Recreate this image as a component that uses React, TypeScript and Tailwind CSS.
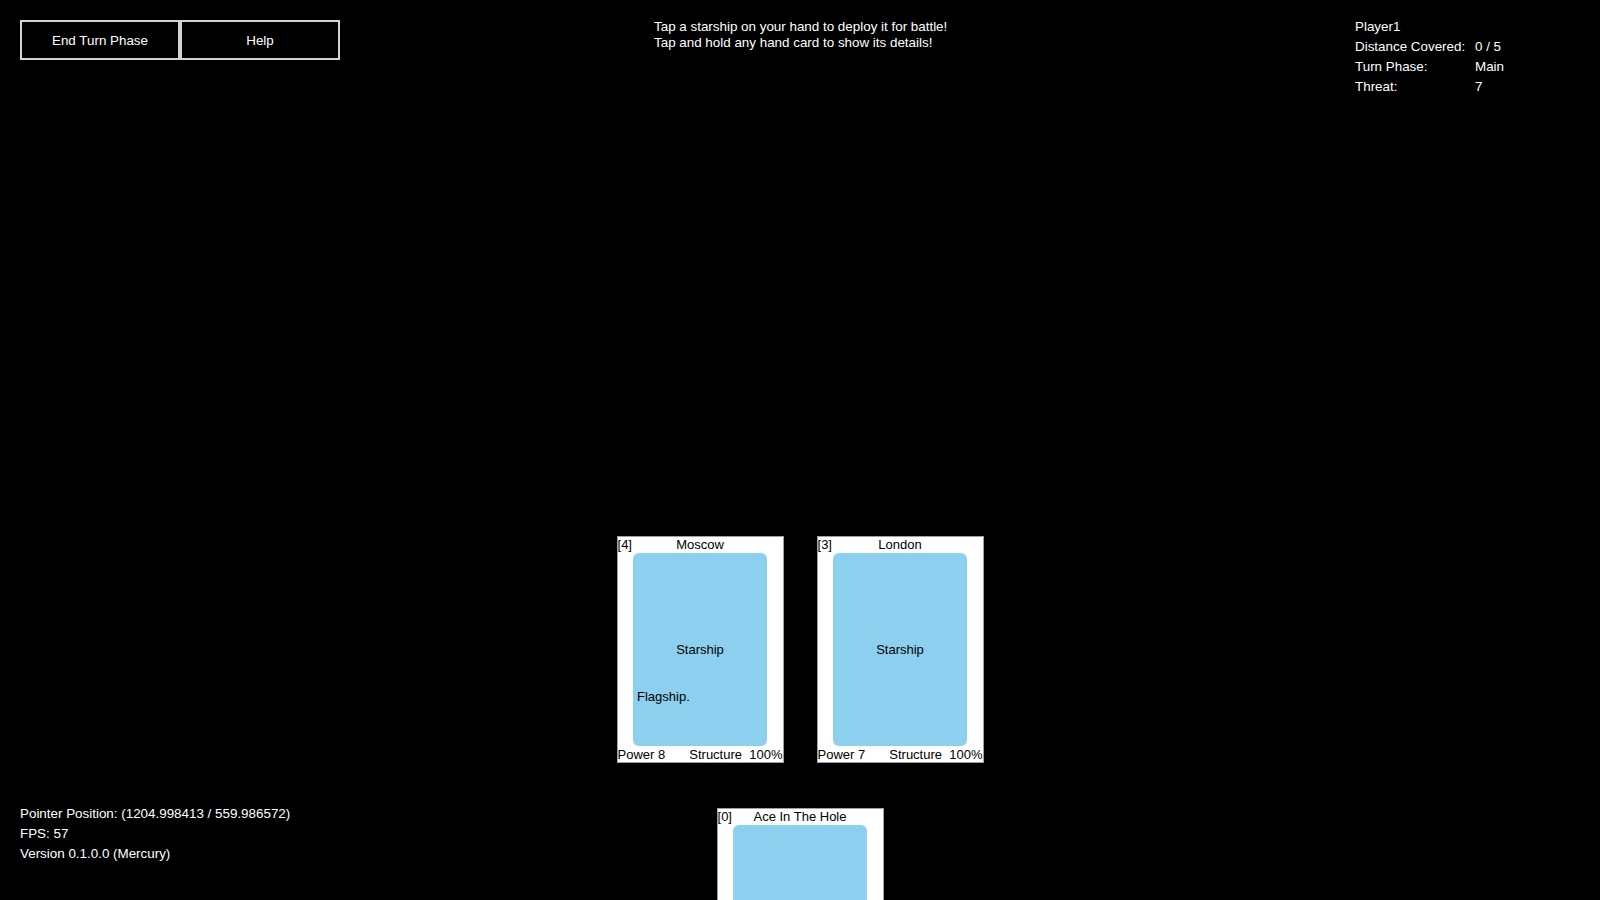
const font = "font-['Liberation_Sans',Arial,sans-serif]";

type CardData = {
  cost: number;
  name: string;
  type?: string;
  text?: string;
  power?: number;
  structure?: string;
};

const hand: CardData[] = [
  { cost: 4, name: "Moscow", type: "Starship", text: "Flagship.", power: 8, structure: "100%" },
  { cost: 3, name: "London", type: "Starship", power: 7, structure: "100%" },
];

const stats = [
  { label: "Distance Covered:", value: "0 / 5" },
  { label: "Turn Phase:", value: "Main" },
  { label: "Threat:", value: "7" },
];

function Card({ card }: { card: CardData }) {
  return (
    <div className="relative flex h-[227px] w-[167px] shrink-0 flex-col border border-[#a0a0a0] bg-white text-[13px] leading-[15px] text-black">
      <div className="relative h-[16px]">
        <span className="absolute left-0 top-0">[{card.cost}]</span>
        <span className="block text-center">{card.name}</span>
      </div>
      <div className="relative mx-auto h-[194px] w-[134px] rounded-[6px] bg-[#8ccfee]">
        <div className="flex h-full items-center justify-center">{card.type}</div>
        {card.text && <div className="absolute left-[4px] top-[136px]">{card.text}</div>}
      </div>
      {card.power !== undefined && (
        <div className="mt-[1px] flex justify-between">
          <span>Power {card.power}</span>
          <span className="whitespace-pre">Structure  {card.structure}</span>
        </div>
      )}
    </div>
  );
}

export default function App() {
  return (
    <div className={`${font} flex h-[900px] w-[1600px] flex-col overflow-hidden bg-black text-[13.4px] leading-[16px] text-white`}>
      <div className="flex h-[100px] shrink-0 items-start pl-5 pt-5">
        <div className="flex">
          <button className="h-[40px] w-[160px] border-2 border-[#d4d4d4] pt-px text-[13.4px]">End Turn Phase</button>
          <button className="h-[40px] w-[160px] border-2 border-[#d4d4d4] pt-px text-[13.4px]">Help</button>
        </div>
        <div className="ml-[314px] -mt-px">
          <p>Tap a starship on your hand to deploy it for battle!</p>
          <p>Tap and hold any hand card to show its details!</p>
        </div>
        <div className="ml-auto w-[245px] -mt-px">
          <p className="h-[20px]">Player1</p>
          {stats.map((s) => (
            <div key={s.label} className="flex h-[20px]">
              <span className="w-[120px]">{s.label}</span>
              <span>{s.value}</span>
            </div>
          ))}
        </div>
      </div>

      <div className="mt-[436px] flex justify-center gap-[33px]">
        {hand.map((c) => (
          <Card key={c.name} card={c} />
        ))}
      </div>

      <div className="mt-[45px] grid grid-cols-[1fr_auto_1fr]">
        <div className="-mt-[2px] pl-5">
          <p className="h-[20px]">Pointer Position: (1204.998413 / 559.986572)</p>
          <p className="h-[20px]">FPS: 57</p>
          <p className="h-[20px]">Version 0.1.0.0 (Mercury)</p>
        </div>
        <Card card={{ cost: 0, name: "Ace In The Hole" }} />
        <div />
      </div>
    </div>
  );
}
